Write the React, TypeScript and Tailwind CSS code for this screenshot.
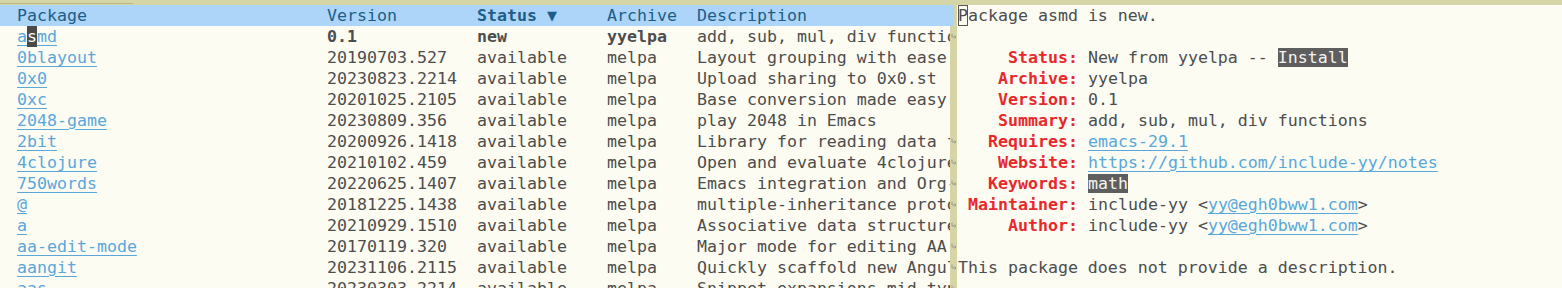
import React from 'react';

const PACKAGES = [
  { name: 'asmd', version: '0.1', status: 'new', archive: 'yyelpa', desc: 'add, sub, mul, div functions', isNew: true, cut: true },
  { name: '0blayout', version: '20190703.527', status: 'available', archive: 'melpa', desc: 'Layout grouping with ease', cut: false },
  { name: '0x0', version: '20230823.2214', status: 'available', archive: 'melpa', desc: 'Upload sharing to 0x0.st', cut: false },
  { name: '0xc', version: '20201025.2105', status: 'available', archive: 'melpa', desc: 'Base conversion made easy', cut: false },
  { name: '2048-game', version: '20230809.356', status: 'available', archive: 'melpa', desc: 'play 2048 in Emacs', cut: false },
  { name: '2bit', version: '20200926.1418', status: 'available', archive: 'melpa', desc: 'Library for reading data from 2bit files', cut: true },
  { name: '4clojure', version: '20210102.459', status: 'available', archive: 'melpa', desc: 'Open and evaluate 4clojure questions', cut: true },
  { name: '750words', version: '20220625.1407', status: 'available', archive: 'melpa', desc: 'Emacs integration and Org-mode export for 750words', cut: true },
  { name: '@', version: '20181225.1438', status: 'available', archive: 'melpa', desc: 'multiple-inheritance prototype-based objects', cut: true },
  { name: 'a', version: '20210929.1510', status: 'available', archive: 'melpa', desc: 'Associative data structure functions', cut: true },
  { name: 'aa-edit-mode', version: '20170119.320', status: 'available', archive: 'melpa', desc: 'Major mode for editing AA(S_JIS Art) and .mlt', cut: true },
  { name: 'aangit', version: '20231106.2115', status: 'available', archive: 'melpa', desc: 'Quickly scaffold new Angular projects', cut: true },
  { name: 'aas', version: '20230303.2214', status: 'available', archive: 'melpa', desc: 'Snippet expansions mid-typing', cut: true },
];

const ContArrow = () => (
  <svg width="6" height="7" viewBox="0 0 6 7" className="block">
    <path d="M1 0.5 V4 H5 M3.5 2.5 L5 4 L3.5 5.5" stroke="#9a9a8a" strokeWidth="1" fill="none" />
  </svg>
);

const Label = ({ children }: { children: React.ReactNode }) => (
  <span className="w-[120px] shrink-0 text-right font-bold text-[#e8282b]">{children}</span>
);

const Link = ({ children }: { children: React.ReactNode }) => (
  <span className="text-[#5aa7da] underline decoration-[#5aa7da] underline-offset-[3px]">{children}</span>
);

const Boxed = ({ children }: { children: React.ReactNode }) => (
  <span className="bg-[#5e5e5e] text-[#f3f3f3]">{children}</span>
);

export default function App() {
  return (
    <div className="w-[1562px] h-[288px] overflow-hidden bg-[#fcfcf3] text-[#4d4d4d] font-['DejaVu_Sans_Mono',monospace] text-[16.6px] leading-[21px]">
      {/* bottom of the window above */}
      <div className="h-[5px] bg-[#d5d5a8] overflow-hidden">
        <div className="w-[133px] h-[4px] border-b border-[#b8b88e] overflow-hidden">
          <div className="pl-[8px] -mt-[12px] text-[#7a7a6a] text-[14px] leading-[14px]">Default</div>
        </div>
      </div>

      <div className="flex">
        {/* package list */}
        <div className="w-[950px] shrink-0 overflow-hidden">
          <div className="flex h-[21px] bg-[#add4f9] pl-[17px] text-[#1c5e88] whitespace-nowrap">
            <span className="w-[310px] shrink-0">Package</span>
            <span className="w-[150px] shrink-0">Version</span>
            <span className="w-[130px] shrink-0 font-bold">Status ▼</span>
            <span className="w-[90px] shrink-0">Archive</span>
            <span>Description</span>
          </div>
          {PACKAGES.map((p, i) => (
            <div key={p.name} className={`flex h-[21px] pl-[17px] whitespace-nowrap ${p.isNew ? 'font-bold' : ''}`}>
              <span className="w-[310px] shrink-0 font-normal">
                {i === 0 ? (
                  <Link>
                    a<span className="bg-[#4a4a4a] text-[#fcfcf3] inline-block h-[21px]">s</span>md
                  </Link>
                ) : (
                  <Link>{p.name}</Link>
                )}
              </span>
              <span className="w-[150px] shrink-0">{p.version}</span>
              <span className="w-[130px] shrink-0">{p.status}</span>
              <span className="w-[90px] shrink-0">{p.archive}</span>
              <span className="font-normal">{p.desc}</span>
            </div>
          ))}
        </div>

        {/* fringe / divider */}
        <div className="w-[7px] shrink-0 bg-[#d5d5a8] flex flex-col">
          <div className="h-[21px] bg-[#add4f9] w-[4px]" />
          {PACKAGES.map((p) => (
            <div key={p.name} className="h-[21px] flex items-center justify-center">
              {p.cut ? <ContArrow /> : null}
            </div>
          ))}
        </div>

        {/* package description */}
        <div className="flex-1 pl-[1px] whitespace-pre">
          <div className="h-[21px]">
            <span className="outline outline-1 -outline-offset-1 outline-[#555] inline-block h-[21px]">P</span>ackage asmd is new.
          </div>
          <div className="h-[21px]" />
          <div className="flex h-[21px] gap-[10px]">
            <Label>Status:</Label>
            <span>New from yyelpa -- <Boxed>Install</Boxed></span>
          </div>
          <div className="flex h-[21px] gap-[10px]">
            <Label>Archive:</Label>
            <span>yyelpa</span>
          </div>
          <div className="flex h-[21px] gap-[10px]">
            <Label>Version:</Label>
            <span>0.1</span>
          </div>
          <div className="flex h-[21px] gap-[10px]">
            <Label>Summary:</Label>
            <span>add, sub, mul, div functions</span>
          </div>
          <div className="flex h-[21px] gap-[10px]">
            <Label>Requires:</Label>
            <Link>emacs-29.1</Link>
          </div>
          <div className="flex h-[21px] gap-[10px]">
            <Label>Website:</Label>
            <Link>https://github.com/include-yy/notes</Link>
          </div>
          <div className="flex h-[21px] gap-[10px]">
            <Label>Keywords:</Label>
            <span><Boxed>math</Boxed></span>
          </div>
          <div className="flex h-[21px] gap-[10px]">
            <Label>Maintainer:</Label>
            <span>include-yy &lt;<Link>yy@egh0bww1.com</Link>&gt;</span>
          </div>
          <div className="flex h-[21px] gap-[10px]">
            <Label>Author:</Label>
            <span>include-yy &lt;<Link>yy@egh0bww1.com</Link>&gt;</span>
          </div>
          <div className="h-[21px]" />
          <div className="h-[21px]">This package does not provide a description.</div>
        </div>
      </div>
    </div>
  );
}
